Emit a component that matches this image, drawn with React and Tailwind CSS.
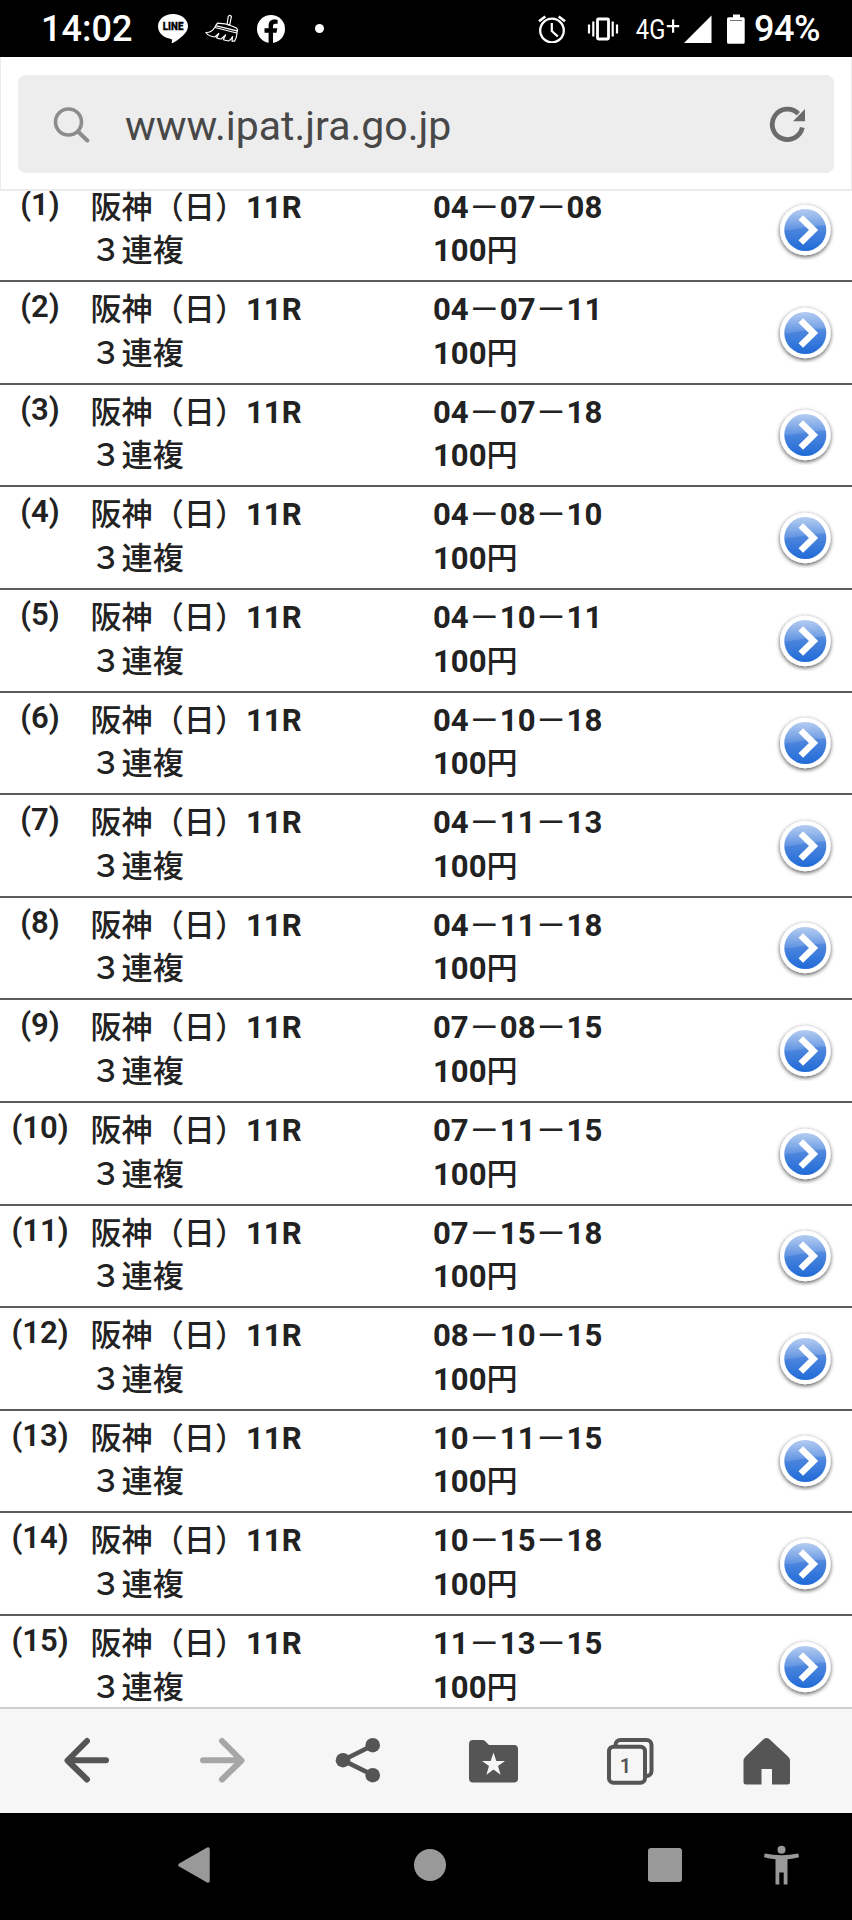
const bets = [
  "04－07－08",
  "04－07－11",
  "04－07－18",
  "04－08－10",
  "04－10－11",
  "04－10－18",
  "04－11－13",
  "04－11－18",
  "07－08－15",
  "07－11－15",
  "07－15－18",
  "08－10－15",
  "10－11－15",
  "10－15－18",
  "11－13－15",
];

const StatusBar = () => (
  <header className="flex h-[57px] shrink-0 items-center bg-black pl-[41px] text-white">
    <span className="w-[117px] text-[36px] leading-none font-medium">14:02</span>

    <svg viewBox="158 13 30 31" className="h-[31px] w-[30px]">
      <path
        fill="#fff"
        d="M173 14c8.300 0 15 5.500 15 12.300 0 3.500-1.800 6.300-5 9.100-3.300 3-7.600 6.300-10.300 7.600-1.100.5-1-.3-.9-1l.2-1.900c0-.7-.3-1-1-1.200C163.700 38 158 32.900 158 26.300 158 19.500 164.700 14 173 14z"
      />
      <text x="173.100" y="30.200" textAnchor="middle" fontSize="10" fontWeight="900" fill="#000" stroke="#000" strokeWidth="0.300" textLength="20.500" lengthAdjust="spacingAndGlyphs">
        LINE
      </text>
    </svg>

    <svg viewBox="205 14 34 29" className="ml-[17px] h-[29px] w-[34px]" fill="none" stroke="#fff" strokeWidth="1.200" strokeLinecap="round" strokeLinejoin="round">
      <path d="M228.200 16.500q1.300-2.300 3.200-.2l-1.700 8.700-2.600-.7z" />
      <path d="M215.500 25.800l2-2.600 7.500.6 5.500 1.700 6 2.500 1.200 2.300-1 2.700-21.700-5.500z" />
      <path d="M216.500 25.800l20.500 5" />
      <path d="M214.500 27.800q-3 5-8.700 4.700 3 4 9 4.500l4-3.500-2.200 4.300q2.200 1.300 4.500 1.200l4.500-4-2.300 4.800q3 1 5 1.200 3-1.500 4.300-4.500l-.6 4.700h2.500q2-3 2.500-7.700" />
    </svg>

    <svg viewBox="257 14 28 28" className="ml-[18px] size-[28px]">
      <circle cx="271" cy="28" r="14" fill="#fff" />
      <path
        fill="#000"
        d="M268.600 42.500V31.800h-4.100v-4.600h4.100v-2.500c0-4 2.100-6.100 5.700-6.100 1.400 0 2.600.1 3.300.3v3.900h-2.200c-1.900 0-2.400 1-2.400 2.400v2h4.300l-.8 4.600H273v10.700z"
      />
    </svg>

    <span className="ml-[30px] size-[9px] rounded-full bg-white" />

    <svg viewBox="538 14 28 28" className="ml-[214px] size-[28px]" fill="none" stroke="#fff">
      <circle cx="552" cy="29.500" r="11.800" strokeWidth="2.300" />
      <path d="M539 20.200l6.300-4.700M565 20.200l-6.300-4.700" strokeWidth="2.600" />
      <path d="M551.800 22v8l6 5.500" strokeWidth="2.200" />
    </svg>

    <svg viewBox="587 17 32 24" className="ml-[21px] h-[24px] w-[32px]" fill="none" stroke="#fff">
      <rect x="597.500" y="19" width="11" height="20" rx="1" strokeWidth="2.800" />
      <path d="M593.300 21.500v15M612.700 21.500v15M589 24.500v9M617 24.500v9" strokeWidth="2.200" />
    </svg>

    <div className="ml-[16px] flex h-[32px] w-[46px]">
      <svg viewBox="634 10 46 32" className="h-[32px] w-[46px] overflow-visible" fill="#fff">
        <text x="634.800" y="36" fontSize="27" textLength="29.500" lengthAdjust="spacingAndGlyphs">4G</text>
        <path d="M671 16.500h2.200v5.500h5v2.200h-5v5.500H671v-5.500h-5.200V22h5.200z" />
      </svg>
    </div>

    <svg viewBox="684 14 28 28" className="ml-[3px] size-[28px]">
      <path d="M711.500 14.500v27.500H684z" fill="#fff" />
    </svg>

    <svg viewBox="727 13 18 30" className="ml-[15px] h-[30px] w-[18px]">
      <path d="M733 13.500h7v2.700h3.200q1.500 0 1.500 1.500v23.600q0 1.500-1.500 1.500h-14.700q-1.500 0-1.500-1.500V17.700q0-1.500 1.500-1.500h4.500z" fill="#fff" />
      <path d="M730 19.500h12" stroke="#777" />
    </svg>

    <span className="ml-[9px] pt-px text-[36px] leading-none font-medium tracking-[-0.5px]">94%</span>
  </header>
);

const AddressBar = () => (
  <div className="h-[134px] shrink-0 border-x border-b-2 border-[#ebebeb] bg-white px-[17px] pt-[18px]">
    <div className="flex h-[98px] items-center rounded-lg bg-[#ededed] pr-[28px] pl-[35px]">
      <svg viewBox="53 105 37 37" className="size-[37px]" fill="none" stroke="#8c8c8c" strokeLinecap="round">
        <circle cx="68.500" cy="121" r="13" strokeWidth="3.600" />
        <path d="M78 130.500l9.300 9" strokeWidth="4" />
      </svg>
      <span className="ml-[35px] flex-1 pt-[5px] text-[41px] leading-none text-[#484848]">www.ipat.jra.go.jp</span>
      <svg viewBox="769 106 37 37" className="size-[37px]">
        <path d="M802.300 127.500a15.200 15.200 0 1 1-4-13.800" fill="none" stroke="#6b6b6b" strokeWidth="4.800" />
        <path d="M805 109v12.300h-12z" fill="#6b6b6b" />
      </svg>
    </div>
  </div>
);

const ArrowBadge = () => (
  <svg viewBox="0 0 60 60" className="size-[60px]">
    <defs>
      <linearGradient id="ball" x1="0" y1="0" x2="0" y2="1">
        <stop offset="0" stopColor="#8ab0ea" />
        <stop offset="0.500" stopColor="#4a84dd" />
        <stop offset="1" stopColor="#206bd8" />
      </linearGradient>
      <linearGradient id="gloss" x1="0" y1="0" x2="0" y2="1">
        <stop offset="0" stopColor="#fff" stopOpacity="0.350" />
        <stop offset="1" stopColor="#fff" stopOpacity="0.100" />
      </linearGradient>
      <filter id="shade" x="-20%" y="-20%" width="140%" height="140%">
        <feDropShadow dx="0" dy="1.500" stdDeviation="2.100" floodColor="#000" floodOpacity="0.700" />
      </filter>
    </defs>
    <circle cx="30.300" cy="30" r="25.300" fill="#fff" filter="url(#shade)" />
    <circle cx="30.300" cy="30" r="21" fill="url(#ball)" />
    <path d="M9.300 30.500a21 21 0 0 1 41.500-5Q40 25 29 27.500T9.300 30.500z" fill="url(#gloss)" />
    <path d="M25.800 17.500L38.500 30 25.800 42.500" fill="none" stroke="#fff" strokeWidth="6.500" />
  </svg>
);

// full-width dashes are drawn lighter than the digits around them
const BetNumbers = ({ numbers }) => (
  <p>
    {numbers.split(/(－)/).map((part, i) =>
      part === "－" ? (
        <span key={i} className="font-medium">
          {part}
        </span>
      ) : (
        part
      ),
    )}
  </p>
);

const BetRow = ({ index, numbers }) => (
  <li className="flex h-[102.6px] shrink-0 border-b-2 border-[#5c5c5c] text-[31.100px] leading-[43.500px] font-bold text-[#222]">
    <span className="w-[80px] pt-[3px] text-center font-semibold">({index})</span>
    <div className="w-[353px] pt-[6px] pl-[10.500px]">
      <p>
        <span className="font-medium">阪神（日）</span>11R
      </p>
      <p className="font-medium">３連複</p>
    </div>
    <div className="flex-1 pt-[6px]">
      <BetNumbers numbers={numbers} />
      <p>
        100<span className="font-medium">円</span>
      </p>
    </div>
    <div className="pt-[20.500px] pr-[17px]">
      <ArrowBadge />
    </div>
  </li>
);

const Toolbar = () => (
  <nav className="grid h-[106px] shrink-0 grid-cols-6 items-center border-t-2 border-[#cfcfcf] bg-[#f6f6f6] px-[18px] pb-[2px] *:size-[50px] *:justify-self-center">
    <svg viewBox="61 1735 50 50" fill="none" stroke="#555" strokeWidth="6" strokeLinecap="round" strokeLinejoin="round">
      <path d="M87 1741l-19.500 19.500L87 1779.500M68 1760.200h38" />
    </svg>
    <svg viewBox="197 1735 50 50" fill="none" stroke="#a6a6a6" strokeWidth="6" strokeLinecap="round" strokeLinejoin="round">
      <path d="M222 1741l19.500 19.500L222 1779.500M241 1760.200h-38" />
    </svg>
    <svg viewBox="333 1735 50 50" fill="#555">
      <path d="M372.500 1745.500l-29.500 14.700 29.500 14.700" fill="none" stroke="#555" strokeWidth="4.600" />
      <circle cx="372.700" cy="1745.200" r="7.300" />
      <circle cx="343" cy="1760.200" r="7.300" />
      <circle cx="372.700" cy="1775.200" r="7.300" />
    </svg>
    <svg viewBox="469 1735 50 50">
      <path
        fill="#555"
        d="M473 1740h9.500q1.500 0 2.500 1l4 4h25q4 0 4 4v29.500q0 4-4 4h-41q-4 0-4-4V1744q0-4 4-4z"
      />
      <path
        fill="#f6f6f6"
        d="M493.500 1752.500l2.800 8.400h8.700l-7 5.200 2.600 8.700-7.100-5.300-7.100 5.300 2.600-8.700-7-5.200h8.700z"
      />
    </svg>
    <svg viewBox="605 1735 50 50" fill="none" stroke="#555" strokeWidth="4">
      <rect x="615.500" y="1740" width="36" height="36" rx="5" />
      <rect x="609" y="1746.700" width="36" height="36" rx="4.500" fill="#f6f6f6" />
      <text x="625.500" y="1773" textAnchor="middle" fontSize="20" fontWeight="600" fill="#555" stroke="none">
        1
      </text>
    </svg>
    <svg viewBox="741 1735 50 50">
      <path
        fill="#555"
        d="M763.500 1739.300q3-2.800 6 0l18.500 17.200q2 2 2 4.500v21q0 2.500-2.500 2.500h-15.500v-15.500h-10.500v15.500H746q-2.500 0-2.500-2.500v-21q0-2.500 2-4.500z"
      />
    </svg>
  </nav>
);

const SystemNav = () => (
  <footer className="flex h-[107px] shrink-0 items-center bg-black pb-[3px]">
    <svg viewBox="178 1847 32 36" className="ml-[178px] h-[36px] w-[32px]">
      <path d="M180 1865l28-16v32z" fill="#999" stroke="#999" strokeWidth="3.500" strokeLinejoin="round" />
    </svg>
    <span className="ml-[204px] size-[32px] rounded-full bg-[#999]" />
    <span className="ml-[202px] size-[34px] rounded-[3px] bg-[#999]" />
    <svg viewBox="764 1845 35 40" className="ml-[82px] h-[40px] w-[35px]" fill="#999">
      <circle cx="781.500" cy="1849.700" r="4" />
      <path d="M764.700 1853.500q16.800 3.600 33.600 0l.7 3.800q-5.500 1.300-11.500 1.900v25.300h-3.800v-12h-4.400v12h-3.800v-25.300q-6-.6-11.500-1.900z" />
    </svg>
  </footer>
);

const App = () => (
  <div className="flex h-[1920px] w-[852px] flex-col overflow-hidden bg-white font-['Roboto','Noto_Sans_CJK_JP',sans-serif]" lang="ja">
    <StatusBar />
    <AddressBar />
    <main className="min-h-0 flex-1 overflow-hidden">
      <ul className="-mt-[11.300px] flex flex-col">
        {bets.map((numbers, i) => (
          <BetRow key={numbers} index={i + 1} numbers={numbers} />
        ))}
      </ul>
    </main>
    <Toolbar />
    <SystemNav />
  </div>
);

export default App;
